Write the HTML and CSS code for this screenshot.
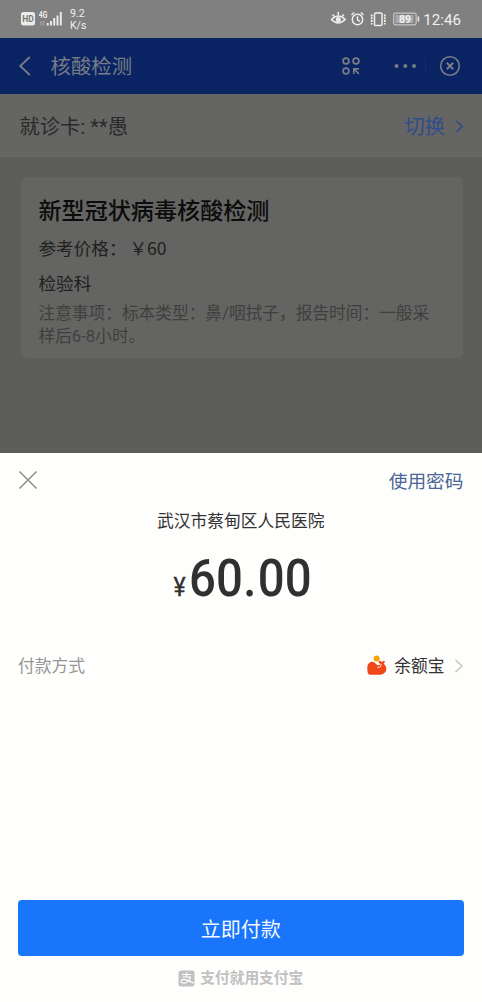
FILE: index.html
```html
<!DOCTYPE html>
<html lang="zh-CN">
<head>
<meta charset="utf-8">
<title>核酸检测</title>
<link rel="stylesheet" href="styles.css">
</head>
<body>
<div class="phone">
  <header class="status">
    <svg class="status-left" width="46" height="20" viewBox="0 0 46 20">
      <rect x="1" y="3" width="14" height="13.500" rx="2.500" fill="#ececec"/>
      <text x="8" y="12.800" class="hd">HD</text>
      <text x="18.800" y="8.500" class="net" textLength="8.500" lengthAdjust="spacingAndGlyphs">4G</text>
      <path d="M21 12v4.500M23.500 12v4.500" stroke="#a6a6a6" stroke-width="1.200"/>
      <path d="M27.700 14v2.500M31 12v4.500M34.200 9v7.500M37.500 6.500v10M40.800 3v13.500" stroke="#eee" stroke-width="1.900"/>
    </svg>
    <div class="speed"><span>9.2</span><span>K/s</span></div>
    <div class="status-right">
      <svg width="90" height="20" viewBox="0 0 90 20" fill="none" stroke="#eee" stroke-width="1.500">
        <path d="M1.500 10.500q6.800-7 13.600 0q-6.800 7-13.600 0zM2.500 5.500l2 2M8.300 3v3M14 5.500l-2 2"/>
        <circle cx="8.300" cy="10.500" r="1.800" fill="#eee"/>
        <circle cx="27.500" cy="10.500" r="5.200"/>
        <path d="M27.500 7.300v3.500l2.500 1.500M21.500 6l2.700-2.500M33.500 6l-2.700-2.500"/>
        <rect x="44.500" y="4" width="7.500" height="12.500" rx="1"/>
        <path d="M41.700 5.500v10M54.800 5.500v10" stroke-width="1.800" stroke-dasharray="2 .8"/>
        <rect x="63.700" y="4.200" width="22.500" height="11.600" rx="2" stroke="#c6c6c6" stroke-width="1.200"/>
        <rect x="65.500" y="6" width="18" height="8" fill="#a9a9a9" stroke="none"/>
        <path d="M88.400 7.500v5"/>
        <text x="75" y="14" class="battery">89</text>
      </svg>
      <span class="clock">12:46</span>
    </div>
  </header>

  <nav class="nav">
    <svg width="14" height="22" viewBox="0 0 14 22" fill="none" stroke="#777c86" stroke-width="1.800"><path d="M11.800 2L2.200 11l9.600 9"/></svg>
    <h1 class="nav-title">核酸检测</h1>
    <svg class="scan" width="20" height="20" viewBox="0 0 20 20" fill="none" stroke="#777c86" stroke-width="1.700">
      <circle cx="5" cy="5" r="2.900"/><circle cx="15" cy="5" r="2.900"/><circle cx="5" cy="15" r="2.900"/>
      <path d="M12.800 18v-5.200H18M13 13l5 5"/>
    </svg>
    <div class="capsule">
      <svg width="24" height="6" viewBox="0 0 24 6" fill="#777c86"><circle cx="3.500" cy="3" r="2"/><circle cx="12.300" cy="3" r="2"/><circle cx="21" cy="3" r="2"/></svg>
      <i class="divider"></i>
      <svg width="22" height="22" viewBox="0 0 22 22" fill="none" stroke="#777c86" stroke-width="1.600"><circle cx="11" cy="11" r="9.300"/><path d="M7.800 7.800l6.400 6.400M14.200 7.800l-6.400 6.400" stroke-width="2"/></svg>
    </div>
  </nav>

  <div class="patient">
    <span>就诊卡: **愚</span>
    <span class="switch">切换<svg width="9" height="14" viewBox="0 0 9 14" fill="none" stroke="#304d8b" stroke-width="1.600"><path d="M1.500 1L7.200 6.500l-5.700 5.500"/></svg></span>
  </div>

  <main class="content">
    <section class="card">
      <h2>新型冠状病毒核酸检测</h2>
      <p class="price">参考价格：<span class="value">￥60</span></p>
      <p class="dept">检验科</p>
      <p class="note">注意事项：标本类型：鼻/咽拭子，报告时间：一般采<br>样后6-8小时。</p>
    </section>
  </main>

  <section class="sheet">
    <div class="sheet-head">
      <svg width="20" height="20" viewBox="0 0 20 20" stroke="#8c8c8c" stroke-width="1.500"><path d="M1.500 1.500l17 17M18.500 1.500l-17 17"/></svg>
      <a class="password">使用密码</a>
    </div>
    <p class="payee">武汉市蔡甸区人民医院</p>
    <p class="amount"><span class="yen">¥</span><span class="sum">60<span class="dot">.</span>00</span></p>
    <div class="method">
      <span class="method-label">付款方式</span>
      <span class="method-value">
        <svg width="20" height="22" viewBox="0 0 20 22">
          <path d="M.3 14C.3 10 2.500 7.700 5.300 7.700c3 0 3.700 3.600 6.200 3.600 1.200 0 1.800-.6 1.800-1.700-1.200-.3-1.800-1.300-1.500-2.600 1.400-.2 2.500.2 3 1.100.6-.9 1.600-1.300 2.900-1 .2 1.300-.2 2.200-1.200 2.700 2 1.300 2.800 3 2.800 5 0 3.500-3 6-6.800 6H2.600C1 20.800.3 18.500.3 14z" fill="#f14716"/>
          <path d="M10.500 13.400c2 .6 3.700-.7 3.700-3.400" fill="none" stroke="#fff2ee" stroke-width="1"/>
          <circle cx="9.700" cy="4.500" r="3.100" fill="#f5a50c"/>
        </svg>
        <span>余额宝</span>
        <svg class="go" width="10" height="14" viewBox="0 0 10 14" fill="none" stroke="#c4c4c4" stroke-width="1.500"><path d="M1.500 1L8 7l-6.500 6"/></svg>
      </span>
    </div>
    <button class="pay">立即付款</button>
    <footer class="brand">
      <svg width="17" height="17" viewBox="0 0 17 17"><rect x=".5" y=".5" width="16" height="16" rx="2.500" fill="#c1c1c1"/><path d="M4 4.500h9M8.500 2.500v4.500M4.500 7h8c-.8 3.500-3.500 6.200-6.500 6.200-3.800 0-3.500-3.800-.3-3.800 2.800 0 6 2.200 10.300 3.800" fill="none" stroke="#fff" stroke-width="1.200"/></svg>
      <span>支付就用支付宝</span>
    </footer>
  </section>
</div>
</body>
</html>
```
FILE: styles.css
```css
* { box-sizing: border-box; margin: 0; padding: 0; }
body { font-family: Roboto, "Noto Sans CJK SC", sans-serif; background: #fefefd; }
svg { display: block; flex: none; }

.phone { width: 482px; height: 1002px; display: flex; flex-direction: column; overflow: hidden; background: #5d5d5b; }

.status { height: 38px; background: #808080; display: flex; align-items: center; padding: 0 21px 0 20px; color: #efefef; }
.hd { font: 700 8.5px Roboto, sans-serif; fill: #777; text-anchor: middle; }
.net { font: 700 9px Roboto, sans-serif; fill: #eee; }
.battery { font: 700 10.5px Roboto, sans-serif; fill: #f2f2f2; stroke: none; text-anchor: middle; }
.speed { display: flex; flex-direction: column; margin-left: 4px; padding-top: 2px; font-size: 10.5px; line-height: 12px; }
.status-right { margin-left: auto; display: flex; align-items: center; gap: 3px; }
.clock { padding-top: 1px; font-size: 15.2px; line-height: 20px; }

.nav { height: 56px; background: #0a2463; display: flex; align-items: center; padding: 0 21px 0 18px; color: #777c86; }
.nav-title { margin-left: 18.5px; padding-top: 1px; font-size: 20.4px; font-weight: 400; line-height: 28px; }
.scan { margin-left: auto; }
.capsule { display: flex; align-items: center; margin-left: 20px; padding-left: 12px; height: 34px; }
.divider { width: 1px; height: 18px; margin: 0 13px 0 8px; background: #142e6a; }

.patient { height: 63px; background: #656563; display: flex; align-items: center; justify-content: space-between; padding: 2px 18px 0 19.5px; font-size: 20.3px; line-height: 28px; color: #2a2a2a; }
.switch { display: flex; align-items: center; gap: 10px; color: #304d8b; }

.content { height: 296px; padding: 20px 19px 0 21px; }
.card { height: 181px; background: #646462; border-radius: 6px; padding: 18px 18px 0 17.5px; }
.card h2 { font-size: 23.1px; font-weight: 500; line-height: 34px; color: #0c0c0c; }
.price, .dept { font-size: 17.6px; line-height: 24px; color: #202020; }
.price { margin-top: 7px; }
.value { margin-left: 3px; font-family: "Noto Sans CJK SC", sans-serif; }
.dept { margin-top: 11px; }
.note { margin-top: 6px; font-size: 16.7px; line-height: 23px; color: #3f3f3e; white-space: nowrap; }

.sheet { flex: 1; background: #fefefd; display: flex; flex-direction: column; padding: 0 18.5px 0 18px; }
.sheet-head { height: 54px; display: flex; align-items: center; justify-content: space-between; }
.password { padding-top: 3px; font-size: 18.7px; line-height: 26px; color: #4a6696; }
.payee { margin-top: 2px; font-size: 16.75px; line-height: 24px; text-align: center; color: #333; }
.amount { margin-top: 16px; height: 60px; display: flex; align-items: baseline; justify-content: center; gap: 3px; color: #303030; line-height: 60px; }
.yen { font-size: 25px; font-weight: 400; transform: scaleX(.92); -webkit-text-stroke: .4px #303030; }
.sum { width: 120px; font-size: 52px; font-weight: 500; transform: scaleX(.91); transform-origin: left; white-space: nowrap; }
.dot { margin: 0 1.5px 0 .5px; }
.method { margin-top: 44px; height: 26px; display: flex; align-items: center; justify-content: space-between; font-size: 16.8px; line-height: 26px; }
.method-label { color: #969696; }
.method-value { display: flex; align-items: center; gap: 7px; color: #333; }
.method-value svg:first-child { margin-bottom: 3px; }
.go { margin-left: 2px; }
.pay { margin-top: 221px; padding-top: 4px; height: 56px; flex: none; border: 0; border-radius: 4px; background: #1976fc; color: #f4f9ff; font: 400 20px/28px Roboto, "Noto Sans CJK SC", sans-serif; }
.brand { margin-top: 12px; display: flex; align-items: center; justify-content: center; gap: 5px; font-size: 14.7px; font-weight: 700; line-height: 20px; color: #c1c1c1; }
```
